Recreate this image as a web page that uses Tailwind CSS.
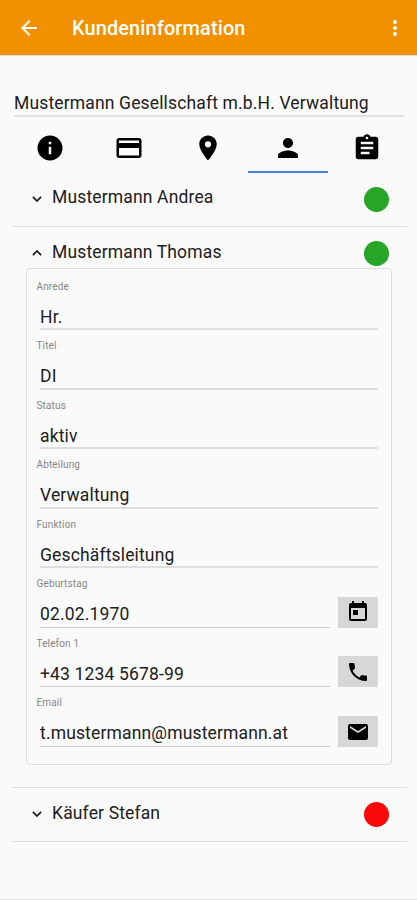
<!DOCTYPE html>
<html lang="de">
<head>
<meta charset="utf-8">
<title>Kundeninformation</title>
<script src="https://cdn.jsdelivr.net/npm/@tailwindcss/browser@4"></script>
</head>
<body class="bg-[#fafafa] overflow-hidden">
<div class="w-[417px] h-[900px] flex flex-col bg-[#fafafa] border-b border-[#e4e4e4] font-['Roboto',sans-serif] text-[#202020] text-[17.5px] tracking-[0.15px] whitespace-nowrap">
  <header class="h-[55px] shrink-0 bg-[#f19100] text-white flex items-center pl-[17px] pr-[10px] shadow-[0_1px_1px_#dedede]">
    <svg class="size-6" viewBox="0 0 24 24" fill="currentColor"><path d="M20 11H7.83l5.59-5.59L12 4l-8 8 8 8 1.41-1.41L7.83 13H20z"/></svg>
    <h1 class="ml-[31px] mt-[2px] grow text-[19.9px] font-medium leading-6"><span>Kundeninformation</span></h1>
    <svg class="size-6" viewBox="0 0 24 24" fill="currentColor"><path d="M12 8a2 2 0 1 0 0-4 2 2 0 0 0 0 4zm0 2a2 2 0 1 0 0 4 2 2 0 0 0 0-4zm0 6a2 2 0 1 0 0 4 2 2 0 0 0 0-4z"/></svg>
  </header>

  <div class="mt-[34px] ml-[14px] mr-[13px] h-[28px] shrink-0 border-b-2 border-[#e0e0e0] leading-[29px]"><span>Mustermann Gesellschaft m.b.H. Verwaltung</span></div>

  <nav class="mt-[6px] ml-[10px] mr-[10px] h-[50px] shrink-0 grid grid-cols-5 text-black">
    <div class="flex justify-center pt-[10px]"><svg class="size-[30px]" viewBox="0 0 24 24" fill="currentColor"><path d="M12 2a10 10 0 1 0 0 20 10 10 0 0 0 0-20zm1 15h-2v-6h2v6zm0-8h-2V7h2v2z"/></svg></div>
    <div class="flex justify-center pt-[10px]"><svg class="size-[30px]" viewBox="0 0 24 24" fill="currentColor"><path d="M20 4H4c-1.110 0-1.990.89-1.990 2L2 18c0 1.110.89 2 2 2h16c1.110 0 2-.89 2-2V6c0-1.110-.89-2-2-2zm0 14H4v-6h16v6zm0-10H4V6h16v2z"/></svg></div>
    <div class="flex justify-center pt-[10px]"><svg class="size-[30px]" viewBox="0 0 24 24" fill="currentColor"><path d="M12 2C8.130 2 5 5.130 5 9c0 5.250 7 13 7 13s7-7.750 7-13c0-3.870-3.130-7-7-7zm0 9.500a2.500 2.500 0 1 1 0-5 2.500 2.500 0 0 1 0 5z"/></svg></div>
    <div class="flex justify-center pt-[10px] border-b-2 border-[#4a80dc]"><svg class="size-[30px]" viewBox="0 0 24 24" fill="currentColor"><path d="M12 12c2.210 0 4-1.790 4-4s-1.790-4-4-4-4 1.790-4 4 1.790 4 4 4zm0 2c-2.670 0-8 1.340-8 4v2h16v-2c0-2.660-5.330-4-8-4z"/></svg></div>
    <div class="flex justify-center pt-[10px]"><svg class="size-[30px]" viewBox="0 0 24 24" fill="currentColor"><path d="M19 3h-4.180C14.400 1.840 13.300 1 12 1s-2.400.84-2.820 2H5c-1.100 0-2 .9-2 2v14c0 1.100.9 2 2 2h14c1.100 0 2-.9 2-2V5c0-1.100-.9-2-2-2zm-7 0c.55 0 1 .45 1 1s-.45 1-1 1-1-.45-1-1 .45-1 1-1zm2 14H7v-2h7v2zm3-4H7v-2h10v2zm0-4H7V7h10v2z"/></svg></div>
  </nav>

  <main class="ml-[11px] mr-[10px] flex flex-col">
    <section class="h-[54px] border-b border-[#dcdcdc] flex items-start pl-[17px] pr-[18px]">
      <svg class="size-[18px] mt-[17px]" viewBox="0 0 24 24" fill="currentColor"><path d="M7.410 8.590 12 13.170l4.590-4.580L18 10l-6 6-6-6z" stroke="currentColor" stroke-width=".6"/></svg>
      <h2 class="ml-[6px] mt-[12px] grow leading-6"><span>Mustermann Andrea</span></h2>
      <span class="mt-[13.5px] size-[25px] rounded-full bg-[#27a527]"></span>
    </section>

    <section class="h-[561px] border-b border-[#dcdcdc]">
      <div class="h-[41px] flex items-start pl-[17px] pr-[18px]">
        <svg class="size-[18px] mt-[17px]" viewBox="0 0 24 24" fill="currentColor"><path d="m12 8-6 6 1.410 1.410L12 10.830l4.590 4.580L18 14z" stroke="currentColor" stroke-width=".6"/></svg>
        <h2 class="ml-[6px] mt-[13px] grow leading-6"><span>Mustermann Thomas</span></h2>
        <span class="mt-[13.5px] size-[25px] rounded-full bg-[#27a527]"></span>
      </div>
      <div class="ml-[15px] mr-[15px] h-[497px] rounded-[4px] border-[1.5px] border-[#dadada] pt-[1.5px] pl-[9.5px] pr-[13px]">
        <div class="h-[59.57px] pt-[10px]"><div class="text-[10px] leading-3 text-[#868686]"><span>Anrede</span></div><div class="ml-[3.5px] mt-[5px] h-[32.57px] border-b-2 border-[#dedede] leading-[38px]"><span>Hr.</span></div></div>
        <div class="h-[59.57px] pt-[10px]"><div class="text-[10px] leading-3 text-[#868686]"><span>Titel</span></div><div class="ml-[3.5px] mt-[5px] h-[32.57px] border-b-2 border-[#dedede] leading-[38px]"><span>DI</span></div></div>
        <div class="h-[59.57px] pt-[10px]"><div class="text-[10px] leading-3 text-[#868686]"><span>Status</span></div><div class="ml-[3.5px] mt-[5px] h-[32.57px] border-b-2 border-[#dedede] leading-[38px]"><span>aktiv</span></div></div>
        <div class="h-[59.57px] pt-[10px]"><div class="text-[10px] leading-3 text-[#868686]"><span>Abteilung</span></div><div class="ml-[3.5px] mt-[5px] h-[32.57px] border-b-2 border-[#dedede] leading-[38px]"><span>Verwaltung</span></div></div>
        <div class="h-[59.57px] pt-[10px]"><div class="text-[10px] leading-3 text-[#868686]"><span>Funktion</span></div><div class="ml-[3.5px] mt-[5px] h-[32.57px] border-b-2 border-[#dedede] leading-[38px]"><span>Geschäftsleitung</span></div></div>
        <div class="h-[59.57px] flex items-end">
          <div class="grow h-full pt-[10px]"><div class="text-[10px] leading-3 text-[#868686]"><span>Geburtstag</span></div><div class="ml-[3.5px] mt-[5px] h-[32.57px] border-b-[1.5px] border-[#cacaca] leading-[38px]"><span>02.02.1970</span></div></div>
          <div class="ml-2 w-[40px] h-[31px] bg-[#d6d8d7] text-black flex items-center justify-center"><svg class="size-[24px]" viewBox="0 0 24 24" fill="currentColor"><path d="M19 3h-1V1h-2v2H8V1H6v2H5c-1.110 0-1.990.9-1.990 2L3 19c0 1.100.89 2 2 2h14c1.100 0 2-.9 2-2V5c0-1.100-.9-2-2-2zm0 16H5V8h14v11zM7 10h5v5H7z"/></svg></div>
        </div>
        <div class="h-[59.57px] flex items-end">
          <div class="grow h-full pt-[10px]"><div class="text-[10px] leading-3 text-[#868686]"><span>Telefon 1</span></div><div class="ml-[3.5px] mt-[5px] h-[32.57px] border-b-[1.5px] border-[#cacaca] leading-[38px]"><span>+43 1234 5678-99</span></div></div>
          <div class="ml-2 w-[40px] h-[31px] bg-[#d6d8d7] text-black flex items-center justify-center"><svg class="size-[24px]" viewBox="0 0 24 24" fill="currentColor"><path d="M6.620 10.790c1.440 2.830 3.760 5.140 6.590 6.590l2.200-2.200c.27-.27.67-.36 1.020-.24 1.120.37 2.330.57 3.570.57.55 0 1 .45 1 1V20c0 .55-.45 1-1 1-9.390 0-17-7.610-17-17 0-.55.45-1 1-1h3.500c.55 0 1 .45 1 1 0 1.250.2 2.450.57 3.570.11.35.03.74-.25 1.020l-2.200 2.200z"/></svg></div>
        </div>
        <div class="h-[59.57px] flex items-end">
          <div class="grow h-full pt-[10px]"><div class="text-[10px] leading-3 text-[#868686]"><span>Email</span></div><div class="ml-[3.5px] mt-[5px] h-[32.57px] border-b-[1.5px] border-[#cacaca] leading-[38px]"><span>t.mustermann@mustermann.at</span></div></div>
          <div class="ml-2 w-[40px] h-[31px] bg-[#d6d8d7] text-black flex items-center justify-center"><svg class="size-[24px]" viewBox="0 0 24 24" fill="currentColor"><path d="M20 4H4c-1.100 0-1.990.9-1.990 2L2 18c0 1.100.9 2 2 2h16c1.100 0 2-.9 2-2V6c0-1.100-.9-2-2-2zm0 4-8 5-8-5V6l8 5 8-5v2z"/></svg></div>
        </div>
      </div>
    </section>

    <section class="h-[54px] border-b border-[#dcdcdc] flex items-start pl-[17px] pr-[18px]">
      <svg class="size-[18px] mt-[17px]" viewBox="0 0 24 24" fill="currentColor"><path d="M7.410 8.590 12 13.170l4.590-4.580L18 10l-6 6-6-6z" stroke="currentColor" stroke-width=".6"/></svg>
      <h2 class="ml-[6px] mt-[13px] grow leading-6"><span>Käufer Stefan</span></h2>
      <span class="mt-[13.5px] size-[25px] rounded-full bg-[#f80808]"></span>
    </section>
  </main>
</div>
</body>
</html>
